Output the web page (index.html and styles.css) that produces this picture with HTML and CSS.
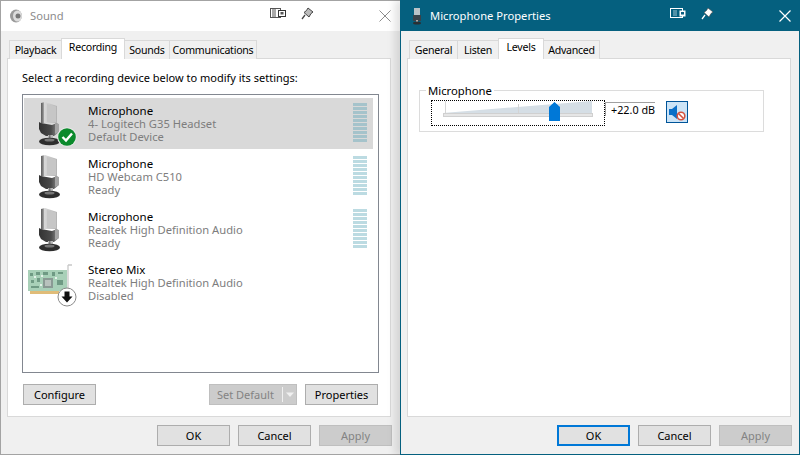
FILE: index.html
```html
<!DOCTYPE html>
<html lang="en">
<head>
<meta charset="utf-8">
<title>Sound</title>
<link rel="stylesheet" href="styles.css">
</head>
<body>
<svg class="defs" width="0" height="0" aria-hidden="true">
  <defs>
    <linearGradient id="micSilver" x1="0" x2="1" y1="0" y2="0">
      <stop offset="0" stop-color="#5c5c5c"/><stop offset=".14" stop-color="#8a8a8a"/><stop offset=".22" stop-color="#d8d8d8"/><stop offset="1" stop-color="#b4b4b4"/>
    </linearGradient>
    <linearGradient id="micDark" x1="0" x2="1" y1="0" y2="0">
      <stop offset="0" stop-color="#333"/><stop offset=".6" stop-color="#4a4a4a"/><stop offset=".85" stop-color="#777"/><stop offset="1" stop-color="#aaa"/>
    </linearGradient>
    <symbol id="mic" viewBox="0 0 50 51">
      <path d="M13 5 L17 4 L29 8 L29 25 L13 25Z" fill="url(#micSilver)"/>
      <path d="M19 6 L28 8.500 L28 24 L19 24Z" fill="#c6c6c6"/>
      <path d="M11 24 L13 25 L24 27 L29 25 L31 27 L31 34 L26 38 L18 38 L13 35 L11 31Z" fill="url(#micDark)"/>
      <path d="M27 25 L31 26 L31 34 L27 36Z" fill="#a4a4a4"/>
      <rect x="20" y="37" width="5" height="5" fill="#b8b8b8"/>
      <rect x="21" y="37" width="1.500" height="5" fill="#777"/>
      <ellipse cx="21.500" cy="43.500" rx="10.500" ry="3.800" fill="#2e2e2e"/>
      <ellipse cx="21.500" cy="42" rx="5" ry="1.500" fill="#777"/>
    </symbol>
    <symbol id="card" viewBox="0 0 50 51">
      <path d="M40 8 L44 8 M40 8 L40 38" stroke="#c8c8c8" stroke-width="1.300" fill="none"/>
      <rect x="0" y="13" width="39" height="21" fill="#a8d0b8"/>
      <rect x="2" y="34" width="29" height="3" fill="#e0bc78"/>
      <rect x="15" y="21" width="10" height="10" fill="#8a9a94"/>
      <rect x="17" y="23" width="6" height="6" fill="#b8c2bd"/>
      <g fill="#6f9a84">
        <rect x="2" y="16" width="3" height="3"/><rect x="8" y="15" width="4" height="3"/><rect x="15" y="15" width="5" height="3"/>
        <rect x="24" y="15" width="3" height="4"/><rect x="30" y="15" width="5" height="2"/><rect x="3" y="23" width="3" height="3"/>
        <rect x="9" y="21" width="3" height="4"/><rect x="3" y="29" width="8" height="2"/><rect x="29" y="23" width="6" height="5"/>
      </g>
      <g fill="#e4f1e9">
        <rect x="6" y="19" width="2" height="2"/><rect x="13" y="18" width="2" height="2"/><rect x="27" y="20" width="2" height="2"/><rect x="12" y="27" width="2" height="2"/>
      </g>
      <circle cx="39" cy="40" r="9" fill="#fff" stroke="#8a8a8a" stroke-width="1"/>
      <path d="M36.500 34.500 H41.500 V39.500 H44.500 L39 45.500 L33.500 39.500 H36.500Z" fill="#111"/>
    </symbol>
  </defs>
</svg>
<main class="desktop">
  <section class="window window-sound">
    <header class="titlebar">
      <svg class="app-icon" width="14" height="14" viewBox="0 0 14 14">
        <ellipse cx="6" cy="7" rx="6" ry="6.500" fill="#9a9a9a"/>
        <ellipse cx="7.500" cy="7" rx="4.500" ry="5.500" fill="#dcdcdc"/>
        <circle cx="8" cy="7" r="2.500" fill="#777"/>
      </svg>
      <h1 class="title">Sound</h1>
      <svg class="tool-a" width="16" height="11" viewBox="0 0 16 11">
        <rect x=".5" y=".5" width="10" height="9" fill="#fff" stroke="#555"/>
        <path d="M3 1 V9 M5 1 V9" stroke="#555"/>
        <rect x="8.500" y="2.500" width="7" height="6" fill="#fff" stroke="#333"/>
        <rect x="10.500" y="4" width="3" height="2.500" fill="#555"/>
      </svg>
      <svg class="tool-b" width="13" height="13" viewBox="0 0 13 13">
        <path d="M7 1 L12 5 L10 6.500 L8 10 L3 5.500 L5.500 3.500Z" fill="#bbb" stroke="#444"/>
        <path d="M4 8 L1 12" stroke="#444" stroke-width="1.300"/>
      </svg>
      <svg class="close" width="12" height="12" viewBox="0 0 12 12"><path d="M.5 .5 L11.500 11.500 M11.500 .5 L.5 11.500" stroke="#8c8c8c" stroke-width="1"/></svg>
    </header>
    <div class="body">
      <nav class="tabs">
        <span class="tab tab-playback">Playback</span>
        <span class="tab tab-active tab-recording">Recording</span>
        <span class="tab tab-sounds">Sounds</span>
        <span class="tab tab-comm">Communications</span>
      </nav>
      <div class="panel panel-sound">
        <p class="hint">Select a recording device below to modify its settings:</p>
        <ul class="devices">
          <li class="device device-selected">
            <svg class="device-icon" viewBox="0 0 50 51"><use href="#mic"/>
              <circle cx="39" cy="39" r="9.800" fill="#e8e8e8"/><circle cx="39" cy="39" r="8.800" fill="#0b8a2c"/>
              <path d="M34.500 39 L38 42.500 L44 35.500" fill="none" stroke="#fff" stroke-width="2.400"/>
            </svg>
            <div class="device-text"><strong class="device-name">Microphone</strong><span class="device-sub">4- Logitech G35 Headset</span><span class="device-sub">Default Device</span></div>
            <div class="meter"><i></i><i></i><i></i><i></i><i></i><i></i><i></i><i></i><i></i><i></i></div>
          </li>
          <li class="device">
            <svg class="device-icon" viewBox="0 0 50 51"><use href="#mic"/></svg>
            <div class="device-text"><strong class="device-name">Microphone</strong><span class="device-sub">HD Webcam C510</span><span class="device-sub">Ready</span></div>
            <div class="meter"><i></i><i></i><i></i><i></i><i></i><i></i><i></i><i></i><i></i><i></i></div>
          </li>
          <li class="device">
            <svg class="device-icon" viewBox="0 0 50 51"><use href="#mic"/></svg>
            <div class="device-text"><strong class="device-name">Microphone</strong><span class="device-sub">Realtek High Definition Audio</span><span class="device-sub">Ready</span></div>
            <div class="meter"><i></i><i></i><i></i><i></i><i></i><i></i><i></i><i></i><i></i><i></i></div>
          </li>
          <li class="device">
            <svg class="device-icon" viewBox="0 0 50 51"><use href="#card"/></svg>
            <div class="device-text"><strong class="device-name">Stereo Mix</strong><span class="device-sub">Realtek High Definition Audio</span><span class="device-sub">Disabled</span></div>
          </li>
        </ul>
        <div class="device-actions">
          <button class="btn" type="button">Configure</button>
          <span class="spacer"></span>
          <button class="btn btn-disabled btn-split" type="button"><span class="split-label">Set Default</span>
            <svg class="split-arrow" width="14" height="17" viewBox="0 0 14 17"><path d="M.5 1 V16" stroke="#f0f0f0"/><path d="M4 6.500 H12 L8 11Z" fill="#f0f0f0"/></svg>
          </button>
          <button class="btn" type="button">Properties</button>
        </div>
      </div>
      <footer class="footer">
        <button class="btn" type="button">OK</button>
        <button class="btn" type="button">Cancel</button>
        <button class="btn btn-disabled" type="button">Apply</button>
      </footer>
    </div>
  </section>

  <section class="window window-props">
    <header class="titlebar titlebar-active">
      <svg class="app-icon" width="14" height="18" viewBox="0 0 14 18">
        <rect x="4" y="1" width="6" height="8" fill="#b9c3c8"/>
        <rect x="3" y="8" width="8" height="6" fill="#39434a"/>
        <rect x="6" y="13" width="2" height="2" fill="#aaa"/>
        <ellipse cx="7" cy="16" rx="4" ry="1.600" fill="#2a2f33"/>
      </svg>
      <h1 class="title">Microphone Properties</h1>
      <svg class="tool-a" width="16" height="11" viewBox="0 0 16 11">
        <rect x=".5" y=".5" width="12" height="9" fill="none" stroke="#fff"/>
        <path d="M4 2 V8 M6 2 V8" stroke="#9fc3d0"/>
        <rect x="9.500" y="2.500" width="6" height="6" fill="#fff"/>
        <rect x="11" y="4" width="3" height="2.500" fill="#0a5f80"/>
      </svg>
      <svg class="tool-b" width="13" height="13" viewBox="0 0 13 13">
        <path d="M7 1 L12 5 L10 6.500 L8 10 L3 5.500 L5.500 3.500Z" fill="#fff" stroke="#444" stroke-width=".6"/>
        <path d="M4 8 L1 12" stroke="#fff" stroke-width="1.300"/>
      </svg>
      <svg class="close" width="12" height="12" viewBox="0 0 12 12"><path d="M.5 .5 L11.500 11.500 M11.500 .5 L.5 11.500" stroke="#fff" stroke-width="1.200"/></svg>
    </header>
    <div class="body">
      <nav class="tabs">
        <span class="tab tab-general">General</span>
        <span class="tab tab-listen">Listen</span>
        <span class="tab tab-active tab-levels">Levels</span>
        <span class="tab tab-advanced">Advanced</span>
      </nav>
      <div class="panel panel-props">
        <div class="group">
          <span class="group-title">Microphone</span>
          <div class="level-row">
            <div class="slider">
              <svg width="172" height="23" viewBox="0 0 172 23">
                <path d="M11 12 L160 0 V12Z" fill="#d5dee5"/>
                <path d="M13.500 0 V12 M86.500 3 V12" stroke="#d4d4d4"/>
                <rect x="11.500" y="12.500" width="149" height="3" fill="#e6e6e6" stroke="#d0d0d0"/>
                <path d="M117 6 L122.500 1 L128 6 V20 H117Z" fill="#0078d7"/>
              </svg>
            </div>
            <div class="level-value">+22.0 dB</div>
            <button class="mute" type="button" aria-label="Unmute">
              <svg width="20" height="19" viewBox="0 0 20 19">
                <path d="M2 6 H5 L10 2 V16 L5 12 H2Z" fill="#0a6fc8"/>
                <circle cx="14" cy="13" r="3.800" fill="#fff" stroke="#d4513f" stroke-width="1.600"/>
                <path d="M11.500 10.500 L16.500 15.500" stroke="#d4513f" stroke-width="1.600"/>
              </svg>
            </button>
          </div>
        </div>
      </div>
      <footer class="footer">
        <button class="btn btn-focus" type="button">OK</button>
        <button class="btn" type="button">Cancel</button>
        <button class="btn btn-disabled" type="button">Apply</button>
      </footer>
    </div>
  </section>
</main>
</body>
</html>
```
FILE: styles.css
```css
* { box-sizing: border-box; }
html, body { margin: 0; padding: 0; }
body { width: 800px; height: 455px; overflow: hidden; font: 11px/16px "Noto Sans", "Liberation Sans", sans-serif; color: #000; background: #f0f0f0; }
.defs { display: block; height: 0; }
.desktop { display: flex; width: 800px; height: 455px; }

.window { width: 400px; height: 455px; display: flex; flex-direction: column; border: 1px solid #a3a3a3; border-right: 0; background: #f0f0f0; }
.window-props { position: relative; border: 1px solid #05607f; box-shadow: -5px 0 8px rgba(0, 0, 0, .12); }

.titlebar { flex: none; height: 30px; display: flex; align-items: center; background: #fff; padding-left: 9px; }
.titlebar-active { background: #05607f; }
.app-icon { flex: none; }
.title { margin: 0 0 0 6px; font-size: 11.200px; font-weight: 400; line-height: 16px; color: #8c8c8c; width: 240px; }
.titlebar-active .title { color: #fff; }
.tool-a { flex: none; margin: -5px 0 0 0; }
.tool-b { flex: none; margin: -5px 0 0 15px; }
.close { flex: none; margin: 0 0 0 65px; }

.body { flex: 1; display: flex; flex-direction: column; padding: 7px 8px 0 6px; }
.tabs { flex: none; height: 21px; display: flex; align-items: flex-end; padding-left: 2px; position: relative; z-index: 1; margin-bottom: -1px; }
.tab { height: 19px; border: 1px solid #d9d9d9; border-bottom: 0; margin-left: -1px; text-align: center; font-size: 10.600px; letter-spacing: -.25px; line-height: 18px; white-space: nowrap; background: #f0f0f0; }
.tab-active { height: 21px; background: #fff; line-height: 17px; }
.tab-playback { width: 53px; margin-left: 0; }
.tab-recording { width: 64px; }
.tab-sounds { width: 46px; }
.tab-comm { width: 88px; }
.tab-general { width: 49px; margin-left: 0; }
.tab-listen { width: 42px; }
.tab-levels { width: 46px; }
.tab-advanced { width: 57px; }

.panel { flex: none; height: 359px; width: 384px; background: #fff; border: 1px solid #d9d9d9; }
.panel-sound { padding: 11px 12px 0 14px; display: flex; flex-direction: column; }
.panel-props { padding: 31px 27px 0 11px; }
.hint { margin: 0 0 8px; line-height: 16px; }

.devices { list-style: none; margin: 0; padding: 3px 5px 0 1px; width: 357px; height: 279px; border: 1px solid #828790; flex: none; }
.device { height: 51px; margin-bottom: 2px; display: flex; align-items: flex-start; padding-left: 4px; }
.device-selected { background: #d9d9d9; }
.device-icon { flex: none; width: 50px; height: 51px; overflow: visible; }
.device-text { flex: 1; margin-left: 10px; padding-top: 6px; display: flex; flex-direction: column; }
.device-name { font-weight: 400; font-size: 11.500px; line-height: 13px; color: #000; }
.device-sub { font-size: 11.200px; line-height: 13px; color: #7d7d7d; }
.meter { flex: none; width: 14px; margin: 5px 6px 0 0; display: flex; flex-direction: column; gap: 1px; }
.meter i { display: block; height: 3px; background: #bcdbe2; }
.device-selected .meter i { background: #a5c3cb; }

.device-actions { display: flex; gap: 8px; margin-top: 11px; padding-left: 1px; width: 356px; }
.spacer { flex: 1; }
.btn { flex: none; width: 73px; height: 21px; padding: 0; border: 1px solid #adadad; background: #e1e1e1; font: inherit; line-height: 17px; color: #000; }
.btn-disabled { background: #ccc; border-color: #bfbfbf; color: #838383; }
.btn-focus { border: 2px solid #0078d7; line-height: 15px; }
.btn-split { width: 88px; display: flex; align-items: center; padding-left: 7px; }
.split-label { width: 66px; text-align: left; white-space: nowrap; }
.split-arrow { flex: none; display: block; }

.group { width: 345px; height: 42px; border: 1px solid #dcdcdc; display: flex; flex-direction: column; padding-left: 11px; }
.group-title { align-self: flex-start; margin: -7px 0 0 -5px; padding: 0 2px; height: 13px; font-size: 11.300px; line-height: 13px; background: #fff; }
.level-row { display: flex; align-items: flex-start; margin-top: 3px; }
.slider { flex: none; width: 174px; height: 26px; border: 1px dotted #000; }
.slider svg { display: block; }
.level-value { flex: none; width: 50px; height: 14px; margin: 2px 0 0 0; border-top: 1px solid #a0a0a0; border-left: 1px solid #a0a0a0; padding-left: 5px; font-size: 10.800px; line-height: 14px; white-space: nowrap; }
.mute { flex: none; width: 22px; height: 22px; margin: 1px 0 0 11px; padding: 0; display: flex; align-items: center; justify-content: center; border: 1px solid #005499; background: #cce4f7; }
.mute svg { display: block; }

.footer { flex: none; display: flex; justify-content: flex-end; gap: 8px; margin: 8px 0 0 0; }
.window-props .footer { margin-right: -1px; }
```
